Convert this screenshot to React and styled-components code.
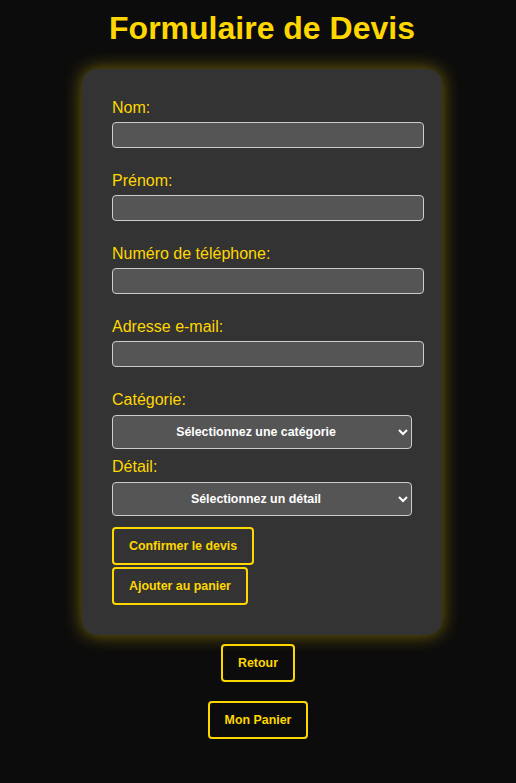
import React from 'react'
import styled, { createGlobalStyle } from 'styled-components'

const GlobalStyle = createGlobalStyle`
  body {
    margin: 0;
    background-color: #0c0c0c;
    font-family: "Liberation Sans", Arial, sans-serif;
  }
`

const Page = styled.div`
  display: flex;
  flex-direction: column;
  align-items: center;
  padding-bottom: 40px;
`

const Title = styled.h1`
  color: #ffd700;
  font-size: 32px;
  margin: 10px 0 22px 8px;
`

const Card = styled.form`
  width: 300px;
  margin-left: 8px;
  padding: 30px;
  background-color: #333;
  border-radius: 15px;
  box-shadow: 0 0 18px rgba(255, 215, 0, 0.45);
`

const Label = styled.label`
  display: block;
  color: #ffd700;
  font-size: 16px;
  line-height: 18px;
  margin-bottom: ${({ tight }) => (tight ? '6px' : '5px')};
`

const Input = styled.input`
  display: block;
  box-sizing: content-box;
  width: 300px;
  height: 24px;
  padding: 0 5px;
  margin: 0 0 24px;
  background-color: #555;
  border: 1px solid #ccc;
  border-radius: 4px;
  color: #fff;
  font-family: inherit;
  font-size: 13px;
`

const Select = styled.select`
  display: block;
  width: 300px;
  height: 34px;
  margin: 0 0 ${({ last }) => (last ? '11px' : '9px')};
  background-color: #555;
  border: 1px solid #ccc;
  border-radius: 4px;
  color: #fff;
  font-family: inherit;
  font-size: 12.4px;
  font-weight: bold;
  text-align: center;
  text-align-last: center;
`

const Button = styled.button`
  display: block;
  box-sizing: border-box;
  height: 38px;
  padding: 0 15px;
  margin: 0 0 ${({ gap }) => gap || '2px'};
  background: transparent;
  border: 2px solid #ffd700;
  border-radius: 4px;
  color: #ffd700;
  font-family: inherit;
  font-size: 12.4px;
  font-weight: bold;
  line-height: 15px;
  cursor: pointer;
`

const Outside = styled.div`
  display: flex;
  flex-direction: column;
  align-items: center;
  margin-top: 9px;
`

function App() {
  return (
    <Page>
      <GlobalStyle />
      <Title>Formulaire de Devis</Title>
      <Card onSubmit={(e) => e.preventDefault()}>
        <Label>Nom:</Label>
        <Input type="text" />
        <Label>Prénom:</Label>
        <Input type="text" />
        <Label>Numéro de téléphone:</Label>
        <Input type="tel" />
        <Label>Adresse e-mail:</Label>
        <Input type="email" />
        <Label tight>Catégorie:</Label>
        <Select defaultValue="">
          <option value="">Sélectionnez une catégorie</option>
        </Select>
        <Label tight>Détail:</Label>
        <Select last defaultValue="">
          <option value="">Sélectionnez un détail</option>
        </Select>
        <Button type="button">Confirmer le devis</Button>
        <Button type="button" gap="0">Ajouter au panier</Button>
      </Card>
      <Outside>
        <Button type="button" gap="19px">Retour</Button>
        <Button type="button" gap="0">Mon Panier</Button>
      </Outside>
    </Page>
  )
}

export default App
